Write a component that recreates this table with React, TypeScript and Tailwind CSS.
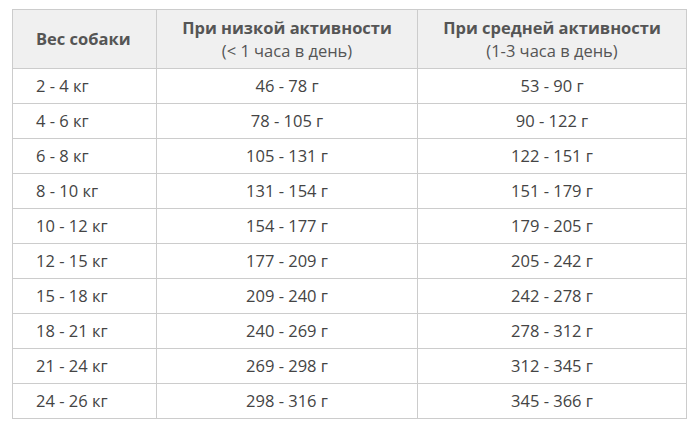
const rows = [
  ["2 - 4 кг", "46 - 78 г", "53 - 90 г"],
  ["4 - 6 кг", "78 - 105 г", "90 - 122 г"],
  ["6 - 8 кг", "105 - 131 г", "122 - 151 г"],
  ["8 - 10 кг", "131 - 154 г", "151 - 179 г"],
  ["10 - 12 кг", "154 - 177 г", "179 - 205 г"],
  ["12 - 15 кг", "177 - 209 г", "205 - 242 г"],
  ["15 - 18 кг", "209 - 240 г", "242 - 278 г"],
  ["18 - 21 кг", "240 - 269 г", "278 - 312 г"],
  ["21 - 24 кг", "269 - 298 г", "312 - 345 г"],
  ["24 - 26 кг", "298 - 316 г", "345 - 366 г"],
]

export default function App() {
  return (
    <div className="min-h-[428px] bg-white pl-[12px] pt-[9px] font-['Open_Sans',sans-serif] text-[16.5px] text-[#444]">
      <table className="w-[674px] table-fixed border-collapse">
        <colgroup>
          <col className="w-[144px]" />
          <col className="w-[261px]" />
          <col className="w-[269px]" />
        </colgroup>
        <thead>
          <tr className="h-[59px] bg-[#f0f0f0] text-[#555]">
            <th className="border border-[#ccc] pl-[23px] text-left font-bold">Вес собаки</th>
            <th className="border border-[#ccc] text-center font-normal leading-[23px]">
              <div className="font-bold">При низкой активности</div>
              <div>(&lt; 1 часа в день)</div>
            </th>
            <th className="border border-[#ccc] text-center font-normal leading-[23px]">
              <div className="font-bold">При средней активности</div>
              <div>(1-3 часа в день)</div>
            </th>
          </tr>
        </thead>
        <tbody>
          {rows.map((r) => (
            <tr key={r[0]} className="h-[35px]">
              <td className="border border-[#ccc] pl-[23px] leading-[20px]">{r[0]}</td>
              <td className="border border-[#ccc] text-center leading-[20px]">{r[1]}</td>
              <td className="border border-[#ccc] text-center leading-[20px]">{r[2]}</td>
            </tr>
          ))}
        </tbody>
      </table>
    </div>
  )
}
